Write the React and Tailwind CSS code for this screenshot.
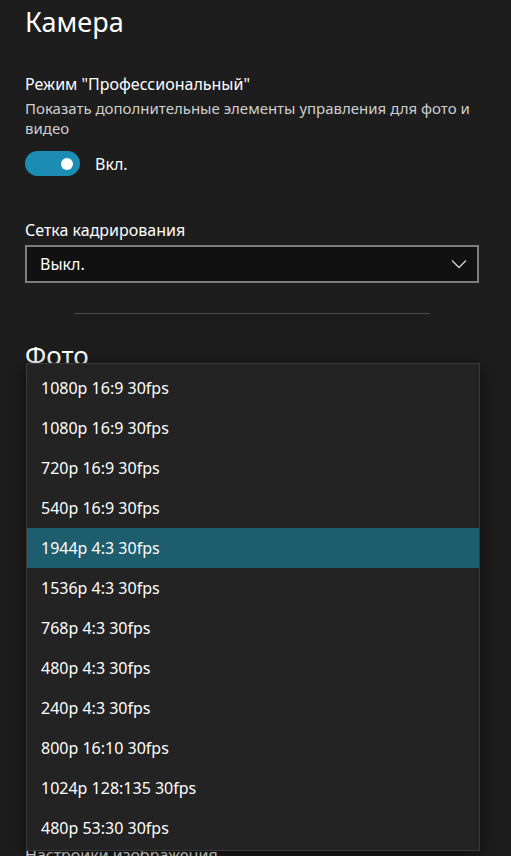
import { useState } from "react";

const modes = [
  "1080p 16:9 30fps",
  "1080p 16:9 30fps",
  "720p 16:9 30fps",
  "540p 16:9 30fps",
  "1944p 4:3 30fps",
  "1536p 4:3 30fps",
  "768p 4:3 30fps",
  "480p 4:3 30fps",
  "240p 4:3 30fps",
  "800p 16:10 30fps",
  "1024p 128:135 30fps",
  "480p 53:30 30fps",
];

export default function App() {
  const [pro, setPro] = useState(true);
  const [selected, setSelected] = useState(4);

  return (
    <div
      className="relative h-[856px] w-[511px] overflow-hidden bg-[#1d1d1d] text-white"
      style={{ fontFamily: '"Noto Sans", "Open Sans", sans-serif' }}
    >
      <div className="pl-[25px] pr-[32px]">
        <h1 className="pt-[4px] text-[27px] leading-[36px] font-normal">Камера</h1>

        <div className="mt-[33px] text-[16px] leading-[22px]">Режим "Профессиональный"</div>
        <div className="mt-[3px] text-[15px] leading-[20px] text-[#cfcfcf]">
          Показать дополнительные элементы управления для фото и видео
        </div>

        <div className="mt-[13px] flex items-center gap-[15px]">
          <button
            onClick={() => setPro(!pro)}
            className={
              pro
                ? "flex h-[25px] w-[55px] items-center justify-end rounded-full bg-[#1b8db4] pr-[7px]"
                : "flex h-[25px] w-[55px] items-center justify-start rounded-full border-2 border-[#cfcfcf] pl-[5px]"
            }
          >
            <span className="h-[12px] w-[12px] rounded-full bg-white" />
          </button>
          <span className="text-[16px]">{pro ? "Вкл." : "Выкл."}</span>
        </div>

        <div className="mt-[43px] text-[16px] leading-[22px]">Сетка кадрирования</div>
        <div className="mt-[4px] flex h-[38px] w-[454px] items-center justify-between border-2 border-[#7d7d7d] bg-[#111111] pl-[13px] pr-[10px]">
          <span className="text-[16px]">Выкл.</span>
          <svg width="16" height="10" viewBox="0 0 16 10" fill="none">
            <path d="M1 1.5 L8 8.5 L15 1.5" stroke="#d0d0d0" strokeWidth="1.3" />
          </svg>
        </div>

        <div className="mt-[30px] ml-[50px] h-px w-[355px] bg-[#4a4a4a]" />

        <h2 className="mt-[24px] text-[26px] leading-[34px] font-normal">Фото</h2>
        <div className="mt-[472px] text-[16px] leading-[22px]">Настройки изображения</div>
      </div>

      <div className="absolute left-[26px] top-[363px] w-[454px] border border-[#3a3a3a] bg-[#232323] pt-[4px] pb-[2px] shadow-[0_4px_16px_rgba(0,0,0,0.6)]">
        {modes.map((m, i) => (
          <div
            key={i}
            onClick={() => setSelected(i)}
            className={
              i === selected
                ? "flex h-[40px] items-center bg-[#1d5d6d] pl-[14px] text-[16px] text-white"
                : "flex h-[40px] items-center pl-[14px] text-[16px] text-white"
            }
          >
            {m}
          </div>
        ))}
      </div>
    </div>
  );
}
